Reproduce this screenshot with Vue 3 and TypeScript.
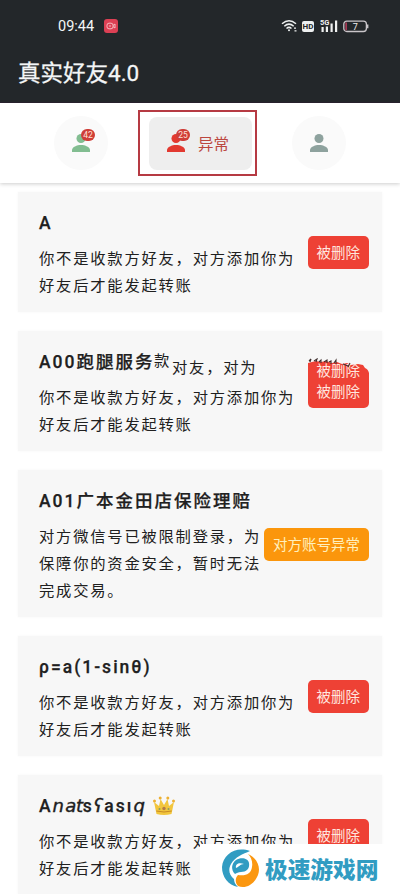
<script setup lang="ts">
type Kind = 'deleted' | 'abnormal'

interface Friend {
  name: string
  lines: string[]
  kind: Kind
  variant?: 'overlap' | 'script'
}

const labels: Record<Kind, string> = { deleted: '被删除', abnormal: '对方账号异常' }
const notFriend = ['你不是收款方好友，对方添加你为', '好友后才能发起转账']

const friends: Friend[] = [
  { name: 'A', lines: notFriend, kind: 'deleted' },
  { name: 'A00跑腿服务', lines: notFriend, kind: 'deleted', variant: 'overlap' },
  {
    name: 'A01广本金田店保险理赔',
    lines: ['对方微信号已被限制登录，为', '保障你的资金安全，暂时无法', '完成交易。'],
    kind: 'abnormal',
  },
  { name: 'ρ=a(1-sinθ)', lines: notFriend, kind: 'deleted' },
  { name: 'Anatstasıq', lines: notFriend, kind: 'deleted', variant: 'script' },
]
</script>

<template>
  <div class="screen">
    <header class="top">
      <div class="status">
        <span class="clock">09:44</span>
        <svg class="rec" width="14" height="14" viewBox="0 0 14 14">
          <rect width="14" height="14" rx="3" fill="#dc4054" />
          <rect x="3" y="4.2" width="6" height="5.6" rx="2" fill="none" stroke="#f6b9bf" />
          <path d="M9 6.5 11 5v4L9 7.6M5 7h2" fill="none" stroke="#f6b9bf" />
        </svg>
        <div class="indicators">
          <svg width="17" height="14" viewBox="0 0 17 14" fill="none" stroke="#eef0f0" stroke-width="1.5">
            <path d="M1 4.8Q8-1.4 15 4.8M3.3 7.2Q8 3 12.7 7.2M5.5 9.5Q8 7.3 10.5 9.5" />
            <circle cx="8" cy="11.3" r="1" fill="#eef0f0" stroke="none" />
            <path d="M13 9.2h2M13.5 11.8h2" stroke-width="1.2" />
          </svg>
          <span class="hd">HD</span>
          <svg class="signal" width="18" height="14" viewBox="0 0 18 14" fill="#eef0f0">
            <text x="0" y="6" font-size="7.5" font-weight="700">5G</text>
            <path d="M1.5 8h2.2v5H1.5zM5.8 7.5H8V13H5.8zM10.5 4.5h2.2V13h-2.2zM15 1.5h2.2V13H15z" />
          </svg>
          <svg class="battery" width="26" height="13" viewBox="0 0 26 13">
            <rect x=".8" y="1.1" width="22.6" height="10.4" rx="3" fill="none" stroke="#c9c5c9" stroke-width="1.3" />
            <path d="M2.3 2.5H4v7.7H2.3z" fill="#a73a55" />
            <path d="M24.7 4.5v3.8" stroke="#c9c5c9" stroke-width="1.4" />
            <text x="9.7" y="9.6" font-size="9" fill="#f1eef0">7</text>
          </svg>
        </div>
      </div>
      <h1>真实好友4.0</h1>
    </header>

    <nav class="tabs">
      <div class="round">
        <div class="person green">
          <svg width="18" height="18" viewBox="0 0 18 18"><circle cx="9" cy="4.5" r="4.5" /><path d="M0 18v-2c0-3 5-5 9-5s9 2 9 5v2z" /></svg>
          <span class="count">42</span>
        </div>
      </div>
      <div class="frame">
        <div class="active">
          <div class="person red">
            <svg width="18" height="18" viewBox="0 0 18 18"><circle cx="9" cy="4.5" r="4.5" /><path d="M0 18v-2c0-3 5-5 9-5s9 2 9 5v2z" /></svg>
            <span class="count">25</span>
          </div>
          <span>异常</span>
        </div>
      </div>
      <div class="round">
        <div class="person gray">
          <svg width="18" height="18" viewBox="0 0 18 18"><circle cx="9" cy="4.5" r="4.5" /><path d="M0 18v-2c0-3 5-5 9-5s9 2 9 5v2z" /></svg>
        </div>
      </div>
    </nav>

    <main class="list">
      <article v-for="f in friends" :key="f.name" class="card">
        <div class="info">
          <h2 v-if="f.variant === 'script'" class="fancy">
            A<i>n</i><i class="tight">a</i><i class="tight">t</i>s<i>ʕ</i>as<span>ı</span><i>q</i>
            <svg width="22" height="20" viewBox="0 0 22 20">
              <path d="M3.5 18 1 6l5 4 1.5-7 3.5 6 3.5-6L16 10l5-4-2.5 12q-7.5 2-15 0z" fill="#f2c63d" />
              <path d="M3.3 15q7.7 2 15.4 0" stroke="#c88a24" fill="none" />
              <g fill="#edb032"><circle cx="1.5" cy="5" r="1.5" /><circle cx="7.2" cy="2" r="1.5" /><circle cx="14.8" cy="2" r="1.5" /><circle cx="20.5" cy="5" r="1.5" /></g>
              <circle cx="11" cy="12.5" r="1.7" fill="#b47b48" />
              <circle cx="6.5" cy="13" r="1" fill="#899c62" /><circle cx="15.5" cy="13" r="1" fill="#899c62" />
            </svg>
          </h2>
          <h2 v-else>{{ f.name }}<template v-if="f.variant === 'overlap'"><span class="ghost-a">款</span><span class="ghost-b">对友，对为</span></template></h2>
          <p><span v-for="l in f.lines" :key="l">{{ l }}</span></p>
        </div>
        <div class="badge" :class="f.kind">
          <div v-if="f.variant === 'overlap'" class="torn">
            <span>被删除</span>
            <svg width="61" height="15" viewBox="0 0 61 15">
              <path d="M0 0h61v15q-1-4-4-5l-2-3-5-1-7 1-4-2-5 1-5-2-5 1-6-2-5 1-5-1-8 2z" fill="#f7f7f7" />
              <path d="m1 3 2-2-1 3M6 3l3-2-1 3M11 4l2-2v3M16 4l3-2v3M21 4l2-1v3M26 5l2-3v4M35 6l5 2M42 5l-2 4" fill="none" stroke="#40302f" stroke-width="1.1" />
            </svg>
          </div>
          {{ labels[f.kind] }}
        </div>
      </article>
    </main>

    <footer class="watermark">
      <svg width="39" height="39" viewBox="0 0 39 39">
        <path d="M28 2C14-3 1 5 0 18c0 10 6 18 16 20-3-3-4-5-4-8-5-4-6-10-3-15 4-7 12-10 19-13z" fill="#319cc2" />
        <path d="M26 5c9 4 13 13 10 21-4 10-13 14-20 11-3-3-3-8 0-11 8 1 13-1 14-8 1-5-1-10-4-13z" fill="#fb9710" />
        <path d="M13 25c-4-4-4-10 1-14 5-3 12-2 13 3 1 6-3 9-8 9-3 0-4 1-6 2z" fill="#319cc2" />
        <path d="M14 19c-1-4 3-6 8-4-4 0-5 3-8 4z" fill="#fff" />
      </svg>
      <span>极速游戏网</span>
    </footer>
  </div>
</template>

<style>
body { margin: 0; overflow: hidden; }
</style>

<style scoped>
* { box-sizing: border-box; }
.screen {
  position: relative;
  display: flex;
  flex-direction: column;
  width: 400px;
  height: 894px;
  overflow: hidden;
  background: #fff;
  color: #202020;
  font-family: Roboto, "Noto Sans CJK SC", sans-serif;
}
.top { flex: none; height: 103px; background: #23272a; color: #f4f6f6; border-bottom: 1px solid #29232f; }
.status { display: flex; align-items: center; height: 52px; padding: 0 31px 0 58px; }
.clock { font-size: 14.5px; width: 46px; }
.indicators { display: flex; align-items: center; margin-left: auto; }
.hd {
  display: grid; place-items: center; width: 12px; height: 11px; margin: 0 6px 0 4px;
  border-radius: 2px; background: #eef0f0; color: #23272a; font-size: 8px; font-weight: 700;
}
.battery { margin-left: 5px; }
h1 { margin: 4px 0 0 18px; font-size: 22.5px; line-height: 34px; font-weight: 400; -webkit-text-stroke: .3px #f4f6f6; }
.tabs {
  flex: none; display: flex; align-items: center; height: 80px; padding: 0 54px;
  box-shadow: 0 1px 4px #0003;
}
.round { display: grid; place-items: center; width: 54px; height: 54px; border-radius: 50%; background: #fafafa; }
.frame { display: flex; align-items: center; width: 119px; height: 66px; margin: 0 35px 0 30px; padding-left: 9px; border: 2px solid #b63a43; }
.active {
  display: flex; align-items: center; gap: 13px; width: 103px; height: 53px; padding-left: 18px;
  border-radius: 8px; background: #eee; color: #bc473f; font-size: 15.5px;
}
.person { position: relative; display: flex; }
.green { fill: #82bd91; }
.red { fill: #e23930; }
.gray { fill: #8ea29e; }
.count {
  position: absolute; top: -5px; left: 9px; display: grid; place-items: center; width: 14px; height: 12px;
  border-radius: 6px; background: #cf3e38; color: #ffe1d9; font-size: 8.5px; line-height: 12px;
}
.list { display: flex; flex-direction: column; gap: 18.5px; padding: 9px 18px 0; }
.card {
  flex: none; display: flex; align-items: center; justify-content: space-between;
  padding: 20px 13px 12.5px 21px; background: #f7f7f7; box-shadow: 0 0 3px #f7f7f7;
}
.info { min-width: 0; }
h2 { position: relative; margin: 0; font-size: 17.5px; line-height: 22px; font-weight: 500; letter-spacing: 2px; white-space: nowrap; -webkit-text-stroke: .25px #202020; }
p { display: flex; flex-direction: column; margin: 12px 0 -1px; font-size: 15.3px; line-height: 27.4px; letter-spacing: 1.78px; white-space: nowrap; }
.ghost-a, .ghost-b { position: absolute; font-weight: 400; font-size: 15.3px; letter-spacing: 1.78px; -webkit-text-stroke: 0; }
.ghost-a { left: 115px; top: -1px; }
.ghost-b { left: 133px; top: 6px; }
.badge {
  position: relative; top: -3px; flex: none; height: 33px; padding: 0 9px; border-radius: 5px; color: #ffe5df;
  font-size: 14.5px; line-height: 36px; white-space: nowrap;
}
.deleted { background: #ee4135; }
.abnormal { background: #fb960c; color: #fff0bd; }
.torn { position: absolute; left: 0; top: -17px; width: 61px; height: 24px; background: #ee4135; overflow: hidden; }
.torn span { position: absolute; left: 9px; top: -4px; }
.torn svg { position: absolute; left: 0; top: 0; }
.fancy { display: flex; align-items: center; }
.fancy i { font-family: "DejaVu Sans", sans-serif; font-weight: 400; font-size: 18px; letter-spacing: 1.3px; -webkit-text-stroke: .4px #202020; }
.fancy .tight { letter-spacing: -.3px; }
.fancy svg { margin-left: 7px; }
.watermark {
  position: absolute; right: 0; bottom: 0; display: flex; align-items: center; gap: 4px; width: 200px; height: 50px;
  padding: 0 0 2px 22px; background: #fff; color: #319cc2; font-size: 22.7px; font-weight: 900; white-space: nowrap;
}
</style>
